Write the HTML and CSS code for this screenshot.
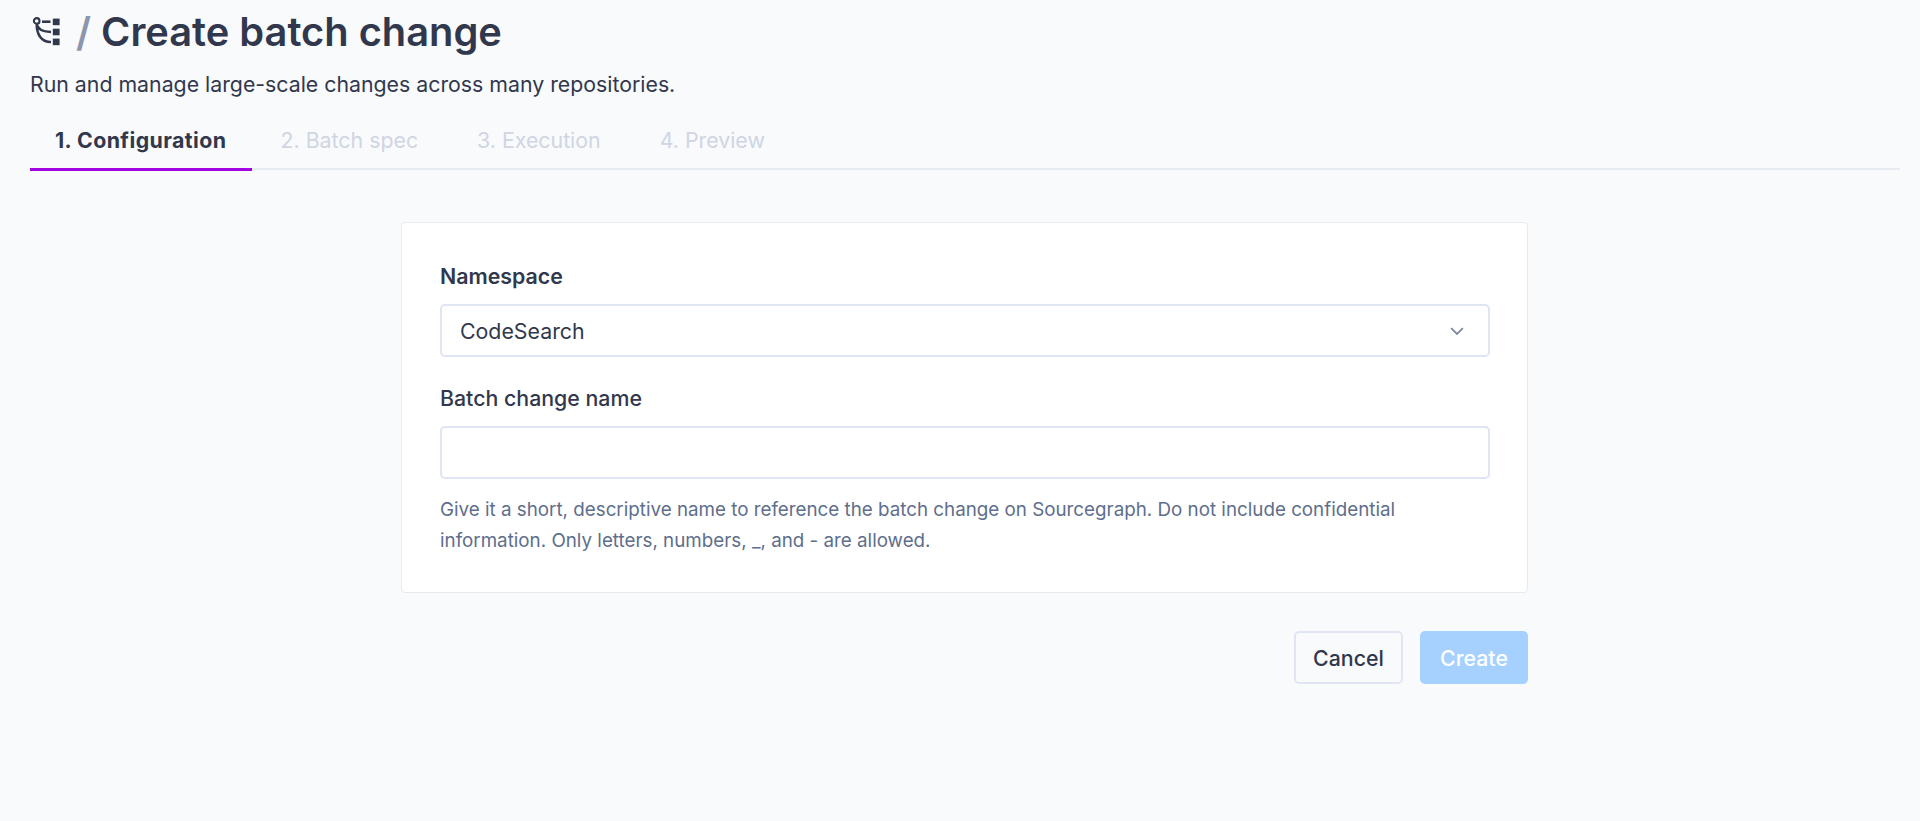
FILE: index.html
```html
<!DOCTYPE html>
<html>
<head>
    <title>Create batch change</title>
    <link rel="stylesheet" href="styles.css">
</head>
<body>
    <div class="page">
        <h1 class="page-title">
            <svg class="title-icon" viewBox="0 0 32 32">
                <circle cx="6.7" cy="4.9" r="2.8" fill="none" stroke="currentColor" stroke-width="2.1"/>
                <path d="M12 5.7h8.5" fill="none" stroke="currentColor" stroke-width="2.6"/>
                <path d="M6.7 7.5C7 12 11 15.5 21 16M6.7 7.5C6.5 18 11 26 21 26" fill="none" stroke="currentColor" stroke-width="2.5"/>
                <rect x="22.8" y="2.6" width="6.8" height="6.6" fill="currentColor"/>
                <rect x="22.8" y="12.7" width="6.8" height="6.6" fill="currentColor"/>
                <rect x="22.8" y="22.6" width="6.8" height="6.6" fill="currentColor"/>
            </svg>
            <span class="divider">/</span>
            <span>Create batch change</span>
        </h1>
        <p class="subtitle">Run and manage large-scale changes across many repositories.</p>

        <div class="tabs">
            <div class="tab active">1. Configuration</div>
            <div class="tab">2. Batch spec</div>
            <div class="tab">3. Execution</div>
            <div class="tab">4. Preview</div>
        </div>

        <div class="form-wrap">
            <div class="card">
                <label class="field-label strong">Namespace</label>
                <div class="select">
                    <span>CodeSearch</span>
                    <svg class="chevron" viewBox="0 0 24 24"><path d="M5 8.5l7 7 7-7" fill="none" stroke="currentColor" stroke-width="2.2"/></svg>
                </div>
                <label class="field-label name-label">Batch change name</label>
                <input class="text-input" type="text">
                <p class="help">Give it a short, descriptive name to reference the batch change on Sourcegraph. Do not include confidential information. Only letters, numbers, _, and - are allowed.</p>
            </div>
            <div class="actions">
                <button class="btn btn-cancel">Cancel</button>
                <button class="btn btn-create">Create</button>
            </div>
        </div>
    </div>
</body>
</html>
```

FILE: styles.css
```css
:root {
    --bg-color: #f9fafc;
    --text-color: #31384d;
    --border-color: #dfe5f3;
    --muted: #5e6e8c;
    --disabled: #cfd5e3;
    --primary: #a305e1;
}

* {
    box-sizing: border-box;
}

body {
    margin: 0;
    height: 100vh;
    overflow: hidden;
    background: var(--bg-color);
    color: var(--text-color);
    font-family: Inter, sans-serif;
}

.page {
    padding: 0 20px 0 30px;
}

.page-title {
    display: flex;
    align-items: center;
    margin: 0;
    height: 64px;
    font-size: 39.8px;
    font-weight: 600;
    line-height: 64px;
}

.title-icon {
    width: 32px;
    height: 32px;
    margin-right: 14px;
}

.divider {
    margin-right: 10px;
    color: #8b96ac;
}

.subtitle {
    margin: 4px 0 0;
    font-size: 21.3px;
    line-height: 32px;
}

.tabs {
    display: flex;
    height: 70px;
    border-bottom: 2px solid #e6ebf2;
}

.tab {
    padding: 0 25px;
    margin-right: 9px;
    font-size: 21.33px;
    line-height: 80px;
    color: var(--disabled);
}

.tab.active {
    height: 71px;
    margin-right: 4px;
    font-weight: 700;
    letter-spacing: 0.42px;
    color: var(--text-color);
    border-bottom: 3px solid var(--primary);
}

.form-wrap {
    width: 1127px;
    margin: 52px 0 0 371px;
}

.card {
    height: 371px;
    padding: 39px 38px 0;
    background: white;
    border: 1px solid #e6ebf2;
    border-radius: 4px;
}

.field-label {
    display: block;
    height: 42px;
    font-size: 21.33px;
    font-weight: 500;
    line-height: 28px;
}

.field-label.strong {
    font-weight: 600;
}

.name-label {
    margin-top: 27px;
}

.select,
.text-input {
    display: flex;
    align-items: center;
    justify-content: space-between;
    width: 1050px;
    height: 53px;
    padding: 0 18px;
    background: white;
    border: 2px solid var(--border-color);
    border-radius: 5px;
    font-size: 21.33px;
    color: var(--text-color);
}

.chevron {
    width: 20px;
    height: 20px;
    margin-right: 3px;
    color: #7c8aa3;
}

.help {
    margin: 15px 0 0;
    font-size: 18.8px;
    line-height: 31px;
    color: var(--muted);
}

.actions {
    display: flex;
    justify-content: flex-end;
    gap: 17px;
    margin-top: 38px;
}

.btn {
    height: 53px;
    border-radius: 5px;
    font-family: inherit;
    font-size: 21.33px;
    font-weight: 500;
}

.btn-cancel {
    width: 109px;
    background: var(--bg-color);
    border: 2px solid var(--border-color);
    color: var(--text-color);
}

.btn-create {
    width: 108px;
    background: #a6d1ff;
    border: none;
    color: white;
}
```
